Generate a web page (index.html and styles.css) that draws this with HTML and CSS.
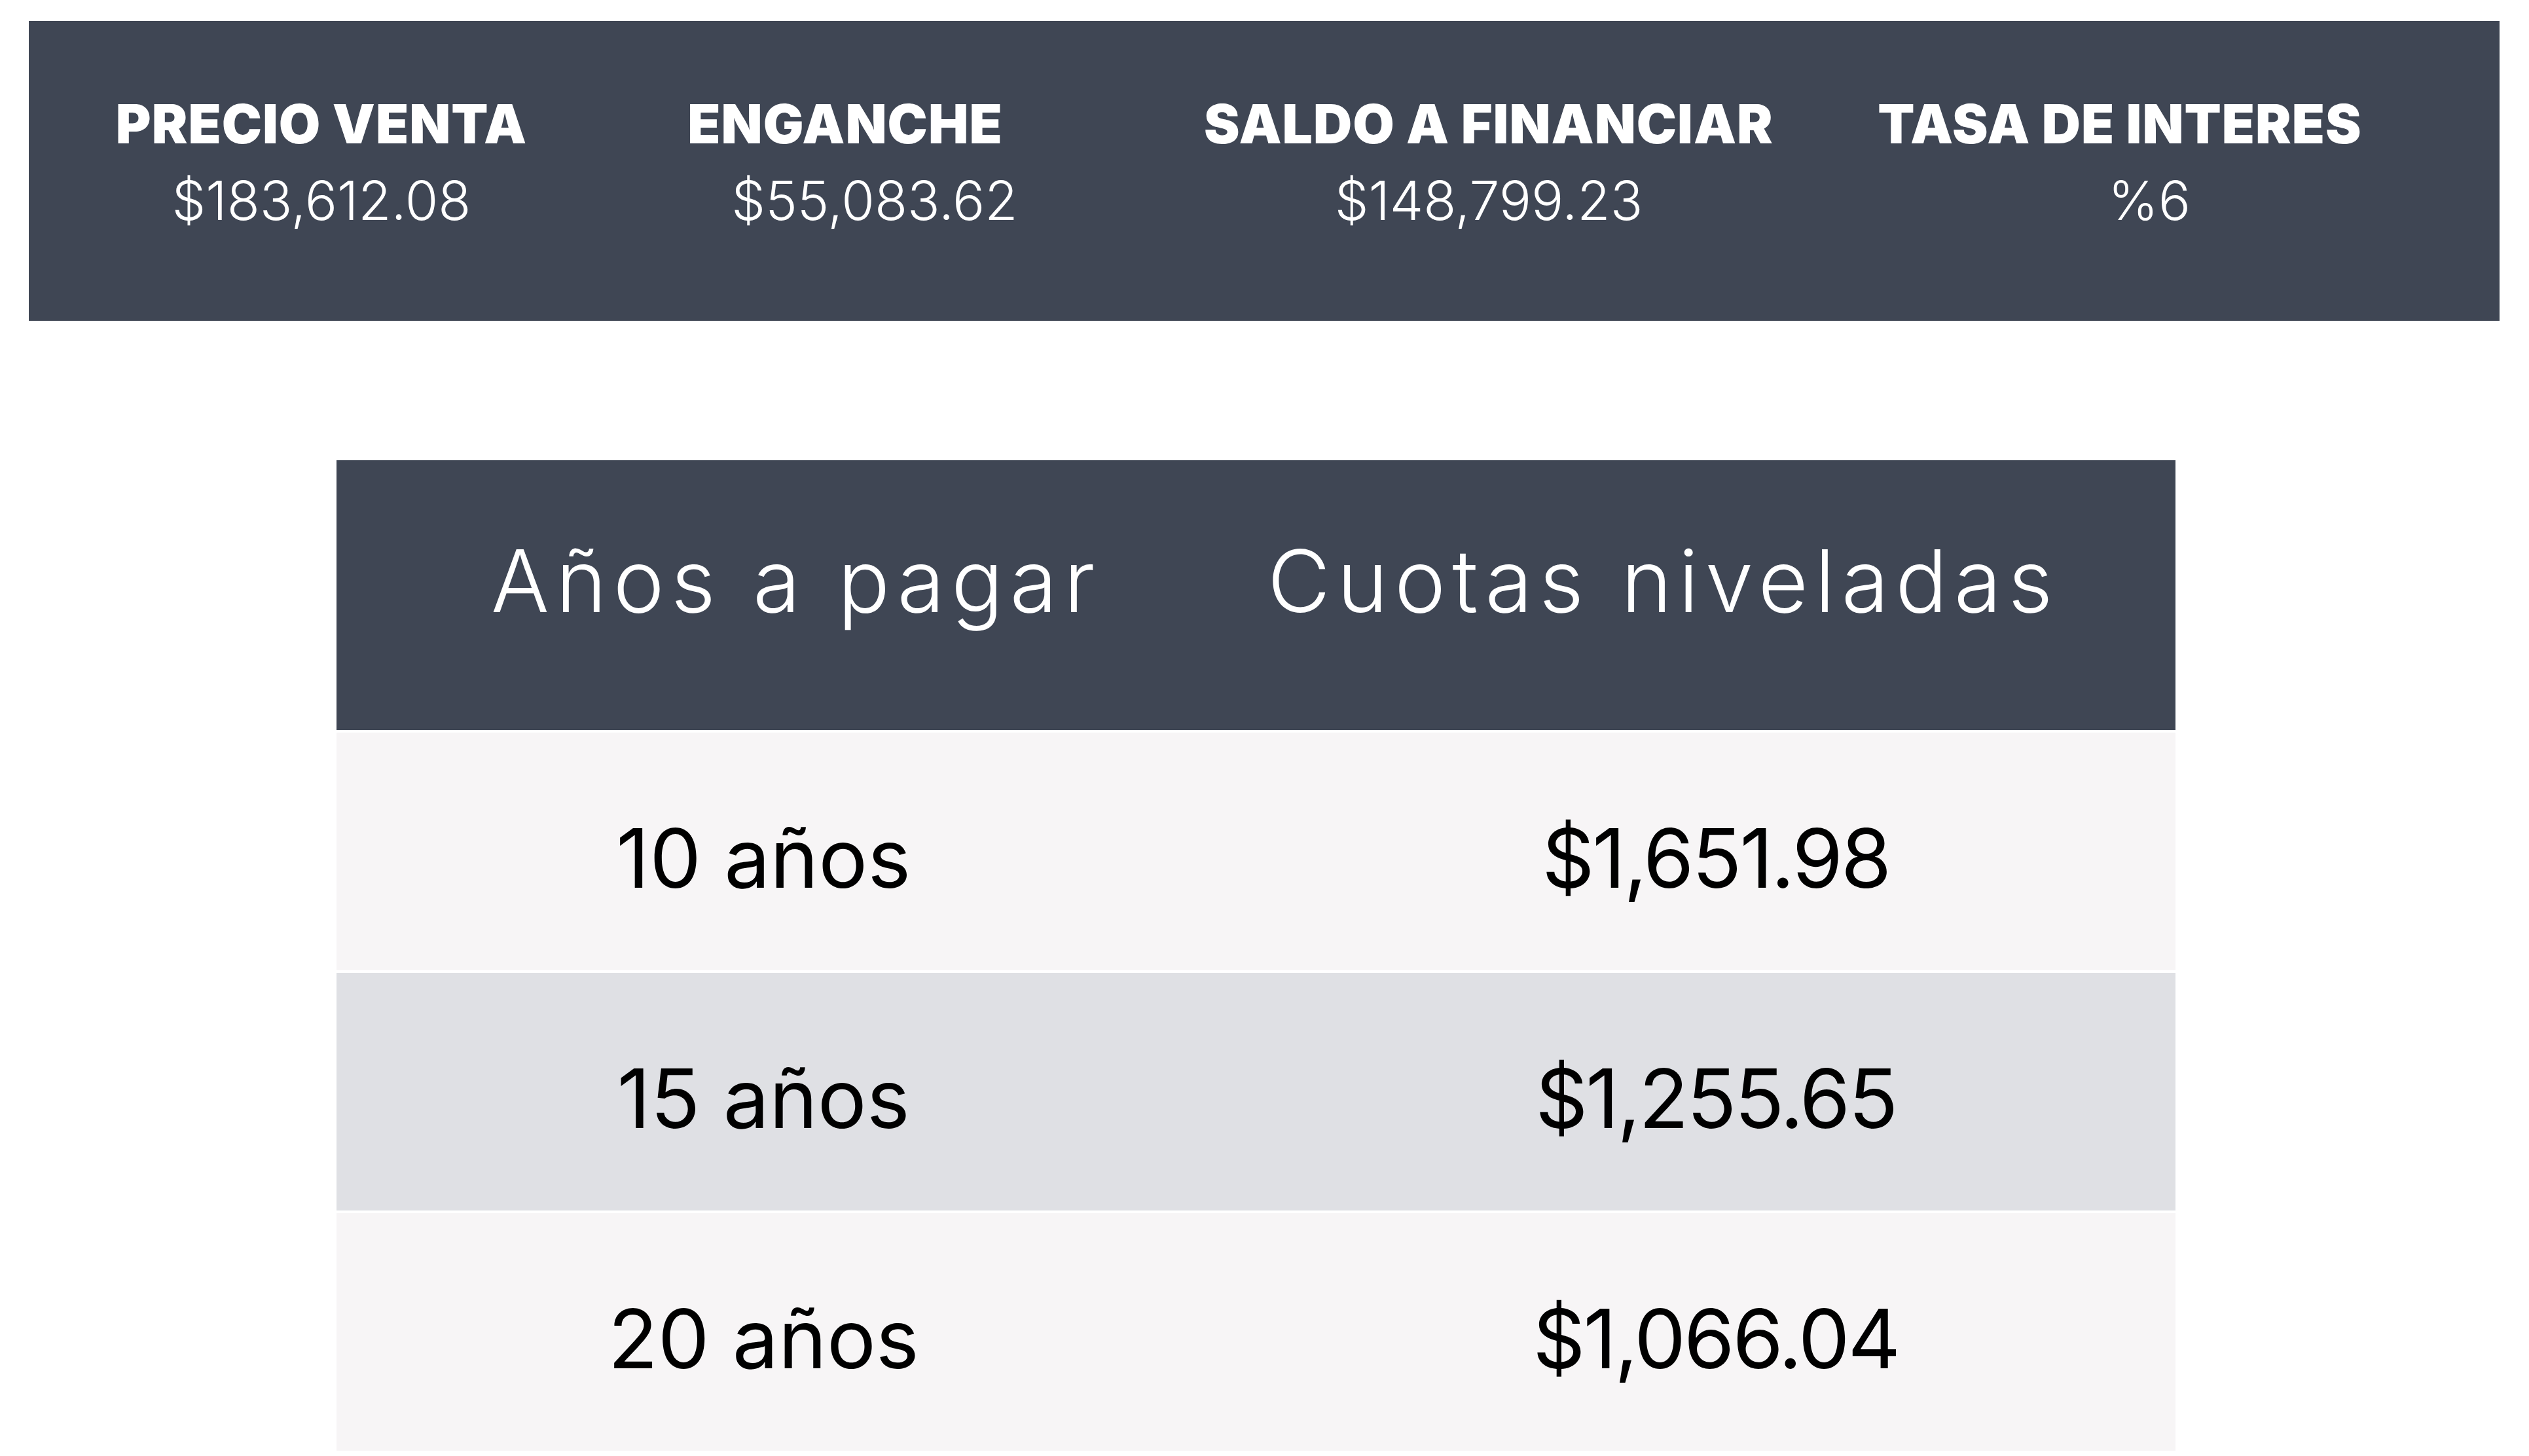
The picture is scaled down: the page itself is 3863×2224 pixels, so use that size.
FILE: index.html
```html
<!DOCTYPE html>
<html lang="es">

<head>
    <meta charset="UTF-8">
    <meta name="viewport" content="width=device-width, initial-scale=1.0">
    <title>Cuotas</title>
    <link rel="stylesheet" href="styles.css">
</head>

<body>
    <div id="resumen">
        <div class="dato">
            <h4>PRECIO VENTA</h4>
            <span>$183,612.08</span>
        </div>
        <div class="dato">
            <h4>ENGANCHE</h4>
            <span class="corrido">$55,083.62</span>
        </div>
        <div class="dato">
            <h4>SALDO A FINANCIAR</h4>
            <span>$148,799.23</span>
        </div>
        <div class="dato">
            <h4>TASA DE INTERES</h4>
            <span class="corrido">%6</span>
        </div>
    </div>

    <div id="tabla">
        <div class="fila cabecera">
            <div class="celda">Años a pagar</div>
            <div class="celda cuota">Cuotas niveladas</div>
        </div>
        <div class="fila">
            <div class="celda anios">10 años</div>
            <div class="celda monto">$1,651.98</div>
        </div>
        <div class="fila gris">
            <div class="celda anios">15 años</div>
            <div class="celda monto">$1,255.65</div>
        </div>
        <div class="fila">
            <div class="celda anios">20 años</div>
            <div class="celda monto">$1,066.04</div>
        </div>
    </div>
</body>
</html>
```

FILE: styles.css
```css
* {
    box-sizing: border-box;
}

body {
    margin: 0;
    background-color: #fff;
    font-family: "Inter", "Liberation Sans", sans-serif;
}

#resumen {
    margin: 32px 45px 0 44px;
    height: 458px;
    padding: 117px 0 0 104px;
    background-color: #3f4654;
    display: grid;
    grid-template-columns: 686px 914px 1052px 876px;
    color: #fff;
}

.dato {
    text-align: center;
    white-space: nowrap;
}

.dato h4 {
    margin: 0 0 35px;
    font-size: 82px;
    line-height: 1;
    font-weight: 900;
    letter-spacing: 1px;
}

.dato span {
    display: block;
    font-size: 82px;
    line-height: 1;
    font-weight: 300;
}

/* el valor va un poco a la derecha del titulo */
.dato span.corrido {
    padding-left: 90px;
}

#tabla {
    margin: 213px 0 0 514px;
    width: 2809px;
}

.fila {
    display: grid;
    grid-template-columns: 1fr 1fr;
    height: 367px;
    background-color: #f7f5f6;
    border-top: 4px solid #fff;
}

.fila.gris {
    background-color: #dfe0e4;
}

.fila.cabecera {
    height: 412px;
    border-top: none;
    background-color: #3f4654;
    color: #fff;
}

.celda {
    display: flex;
    align-items: center;
    justify-content: center;
    padding-top: 20px;
    font-size: 125px;
    line-height: 1;
    color: #000;
}

.cabecera .celda {
    padding-top: 0;
    padding-bottom: 44px;
    font-size: 132px;
    font-weight: 300;
    letter-spacing: 10px;
    color: #fff;
}

.cabecera .cuota {
    padding-right: 160px;
}

.celda.anios {
    padding-right: 100px;
}

.celda.monto {
    letter-spacing: -3px;
}
```
